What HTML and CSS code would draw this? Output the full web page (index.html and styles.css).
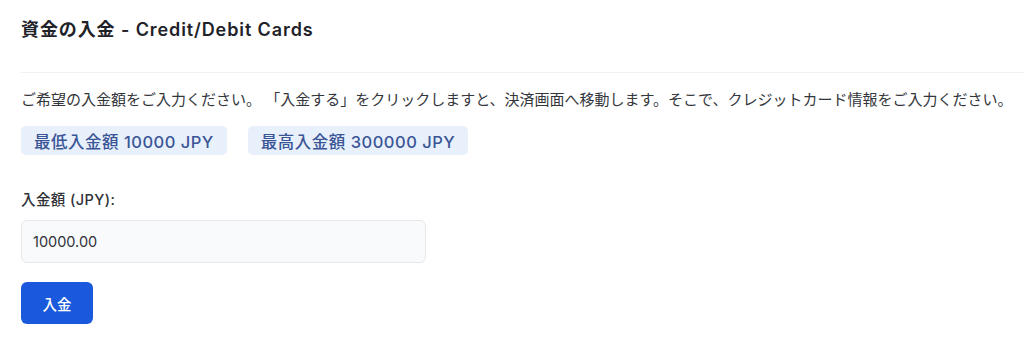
FILE: index.html
```html
<!DOCTYPE html>
<html lang="ja">
<head>
<meta charset="utf-8">
<link rel="stylesheet" href="styles.css">
</head>
<body>
<div class="page">
  <header class="head">
    <h1 class="title">資金の入金 - Credit/Debit Cards</h1>
  </header>
  <div class="content">
    <p class="intro">ご希望の入金額をご入力ください。 「入金する」をクリックしますと、決済画面へ移動します。そこで、クレジットカード情報をご入力ください。</p>
    <div class="limits">
      <span class="badge">最低入金額 10000 JPY</span>
      <span class="badge">最高入金額 300000 JPY</span>
    </div>
    <form class="form">
      <label class="label" for="amount">入金額 (JPY):</label>
      <input class="input" id="amount" type="text" value="10000.00">
      <button class="btn" type="button">入金</button>
    </form>
  </div>
</div>
</body>
</html>
```

FILE: styles.css
```css
* { box-sizing: border-box; }
html, body { margin: 0; padding: 0; background: #ffffff; }
body {
  font-family: Inter, "Noto Sans CJK JP", "Noto Sans", sans-serif;
  color: #2b2f36;
}
.page { width: 1024px; height: 339px; overflow: hidden; }
.head {
  padding: 18px 0 30px 21px;
}
.title {
  margin: 0;
  font-size: 18px;
  line-height: 24px;
  font-weight: 600;
  letter-spacing: 0.9px;
  color: #1f2329;
}
.content {
  margin-left: 21px;
  border-top: 1px solid #f0f1f3;
  padding-top: 16px;
}
.intro {
  margin: 0;
  font-size: 15px;
  line-height: 22px;
  color: #33363b;
  white-space: nowrap;
}
.limits {
  display: flex;
  gap: 21px;
  margin-top: 15px;
}
.badge {
  display: inline-flex;
  align-items: center;
  height: 29px;
  padding: 0 13px;
  background: #e8f0fc;
  border-radius: 5px;
  color: #3a5596;
  font-size: 16.5px;
  font-weight: 500;
  letter-spacing: 0.5px;
}
.form {
  display: flex;
  flex-direction: column;
  align-items: flex-start;
  margin: 35px 0 0 0;
}
.label {
  font-size: 14.5px;
  line-height: 20px;
  font-weight: 500;
  letter-spacing: 0.4px;
  color: #2f3237;
}
.input {
  margin-top: 10px;
  width: 405px;
  height: 43px;
  padding: 0 11px;
  background: #f8fafc;
  border: 1px solid #e6e8eb;
  border-radius: 6px;
  font-family: inherit;
  font-size: 14.5px;
  color: #2f3237;
  outline: none;
}
.btn {
  margin-top: 19px;
  width: 72px;
  height: 42px;
  border: none;
  border-radius: 6px;
  background: #1b59dc;
  color: #ffffff;
  font-family: inherit;
  font-size: 14.5px;
  font-weight: 500;
}
```
